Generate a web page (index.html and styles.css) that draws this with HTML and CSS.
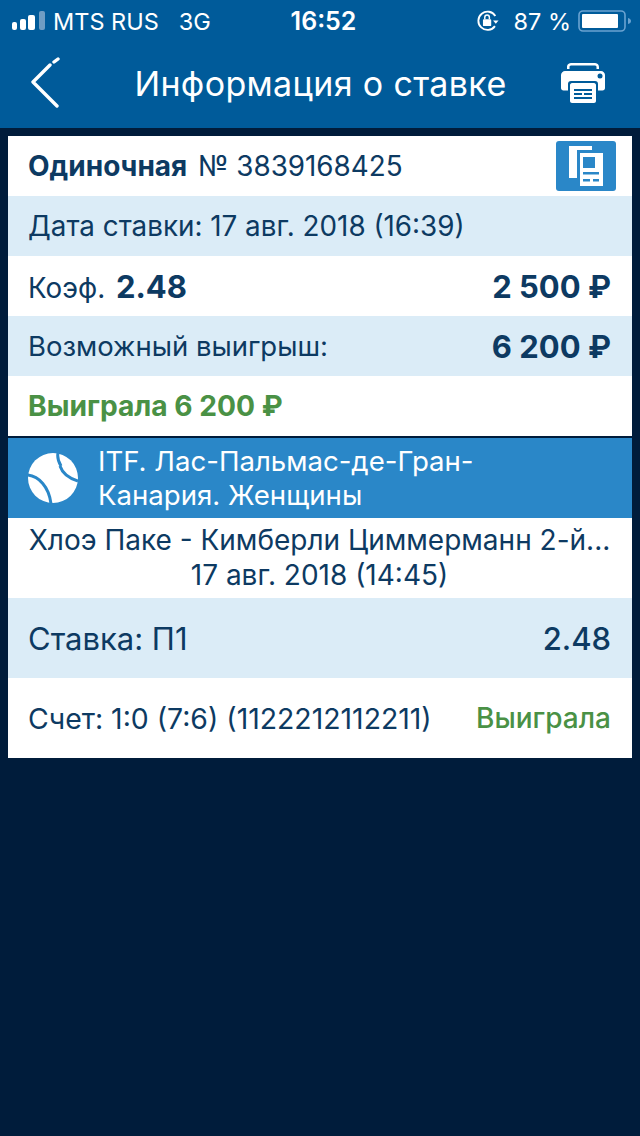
FILE: index.html
```html
<!DOCTYPE html>
<html lang="ru">
 <head>
  <meta charset="utf-8">
  <meta name="viewport" content="width=device-width, initial-scale=1.0">
  <title>Информация о ставке</title>
  <link rel="stylesheet" href="styles.css">
 </head>
 <body>
  <header class="header">
   <div class="status">
    <div class="status-left">
     <svg class="signal" width="33" height="20" viewBox="0 0 33 20">
      <rect x="0" y="11" width="5" height="8" rx="2" fill="#fff"/>
      <rect x="8" y="8" width="6" height="11" rx="2" fill="#fff"/>
      <rect x="16" y="4" width="7" height="15" rx="2" fill="#fff"/>
      <rect x="27" y="0" width="6" height="19" rx="2" fill="#6f9dc4"/>
     </svg>
     <span class="carrier">MTS RUS</span>
     <span class="network">3G</span>
    </div>
    <div class="clock">16:52</div>
    <div class="status-right">
     <svg class="lock" width="24" height="22" viewBox="0 0 26 24">
      <path d="M20.600 17.600A10 10 0 1 1 21 6.500" fill="none" stroke="#fff" stroke-width="2"/>
      <path d="M18.500 11.500h6l-3 3.500z" fill="#fff"/>
      <rect x="7.500" y="10" width="9" height="7.500" rx="1" fill="#fff"/>
      <path d="M9.500 10V8a2.500 2.500 0 0 1 5 0v2" fill="none" stroke="#fff" stroke-width="1.600"/>
     </svg>
     <span class="battery-text">87 %</span>
     <svg class="battery" width="54" height="24" viewBox="0 0 54 24">
      <rect x="1" y="2" width="46" height="20" rx="4" fill="none" stroke="#6aa3d1" stroke-width="1.600"/>
      <rect x="4" y="5" width="36" height="14" rx="1" fill="#fff"/>
      <path d="M50 9c2 .5 3 1.500 3 3s-1 2.500-3 3z" fill="#6aa3d1"/>
     </svg>
    </div>
   </div>
   <div class="nav">
    <svg class="back" width="30" height="52" viewBox="0 0 30 52">
     <path d="M28 2 24 5M20 8 3 25 27 49" fill="none" stroke="#fff" stroke-width="3.400" stroke-linecap="round" stroke-linejoin="round"/>
    </svg>
    <h1 class="title">Информация о ставке</h1>
    <svg class="print" width="44" height="42" viewBox="0 0 44 42">
     <path d="M6 5.500C6 2 8 1 11 1h22c3 0 5 1 5 4.500v1.500h-2.500V5c0-1-.5-1.500-2.500-1.500H11C9 3.500 8.500 4 8.500 5v2H6z" fill="#fff"/>
     <path d="M4 9h36c2 0 4 2 4 4v13c0 1.500-1 2.500-2.500 2.500H37V22a3 3 0 0 0-3-3H10a3 3 0 0 0-3 3v6.500H2.500C1 28.500 0 27.500 0 26V13c0-2 2-4 4-4z" fill="#fff"/>
     <circle cx="39" cy="14" r="2.500" fill="#005b9a"/>
     <path d="M11 21h22c1 0 2 1 2 2v16c0 1-1 2-2 2H11c-1 0-2-1-2-2V23c0-1 1-2 2-2z" fill="#fff"/>
     <path d="M13 27h18v2H13zM13 31h8v2h-8zM23 31h8v2h-8zM13 35h18v2H13z" fill="#005b9a"/>
    </svg>
   </div>
  </header>

  <main class="card">
   <div class="row row-first">
    <div><b class="kind">Одиночная</b> <span class="num">№ 3839168425</span></div>
    <div class="copy">
     <svg width="60" height="50" viewBox="0 0 60 50">
      <path d="M13 5h23v4H21v28h-8z" fill="#fff"/>
      <path d="M24 12h23v33H24z" fill="#fff"/>
      <path d="M27 16h12v11H27zM27 31h16v2.500H27zM27 38h7v2.500h-7zM37 38h6v2.500h-6z" fill="#2a87c8"/>
     </svg>
    </div>
   </div>
   <div class="row row-light">Дата ставки: 17 авг. 2018 (16:39)</div>
   <div class="row">
    <div>Коэф. <b class="coef">2.48</b></div>
    <b class="sum">2 500 ₽</b>
   </div>
   <div class="row row-light">
    <div class="possible">Возможный выигрыш:</div>
    <b class="sum">6 200 ₽</b>
   </div>
   <div class="row"><b class="won">Выиграла 6 200 ₽</b></div>

   <div class="league">
    <svg class="ball" width="50" height="50" viewBox="0 0 50 50">
     <circle cx="25" cy="25" r="25" fill="#fff"/>
     <path d="M30 0c-1 5 0 8 3 13M32 13c2 6 8 12 18 15M-1 22c12 1 22 12 24 29" fill="none" stroke="#2a87c8" stroke-width="3"/>
    </svg>
    <div class="league-name">ITF. Лас-Пальмас-де-Гран-<br>Канария. Женщины</div>
   </div>
   <div class="match">
    <div class="match-name">Хлоэ Паке - Кимберли Циммерманн 2-й...</div>
    <div class="match-date">17 авг. 2018 (14:45)</div>
   </div>
   <div class="row row-light row-tall">
    <div>Ставка: П1</div>
    <div class="odds">2.48</div>
   </div>
   <div class="row row-tall">
    <div class="score">Счет: 1:0 (7:6) (1122212112211)</div>
    <div class="won-small">Выиграла</div>
   </div>
  </main>
 </body>
</html>
```

FILE: styles.css
```css
* {
 box-sizing: border-box;
}

body {
 margin: 0;
 min-height: 1136px;
 background-color: #001c3b;
 color: #0d3a62;
 font-family: 'Inter', 'Liberation Sans', sans-serif;
 font-size: 27.8px;
}

b {
 font-weight: 700;
}

.header {
 height: 128px;
 background-color: #005b9a;
 color: white;
}

.status {
 height: 40px;
 padding: 2px 8px 0 12px;
 display: flex;
 align-items: center;
 justify-content: space-between;
 font-size: 23.5px;
}

.status-left {
 display: flex;
 align-items: center;
 width: 260px;
}

.signal {
 margin-right: 8px;
}

.network {
 margin-left: 20px;
}

.clock {
 font-weight: 600;
 font-size: 25px;
 margin-left: 3px;
}

.status-right {
 display: flex;
 align-items: center;
 justify-content: flex-end;
 width: 260px;
}

.lock {
 margin-right: 13px;
}

.battery {
 margin-left: 7px;
}

.nav {
 height: 88px;
 padding: 0 35px 2px 30px;
 display: flex;
 align-items: center;
 justify-content: space-between;
}

.title {
 margin: 0 0 0 20px;
 font-size: 34px;
 font-weight: 400;
 letter-spacing: 0.35px;
}

.card {
 margin: 8px 8px 0;
 background-color: white;
}

.row {
 height: 60px;
 padding: 0 21px 0 20px;
 display: flex;
 align-items: center;
 justify-content: space-between;
}

.row-first {
 padding-right: 16px;
}

.row-light {
 background-color: #dbecf7;
}

.row-tall {
 height: 80px;
 font-size: 31px;
}

.kind {
 font-size: 28px;
}

.num {
 margin-left: 3px;
}

.copy {
 width: 60px;
 height: 50px;
 background-color: #2a87c8;
 border-radius: 3px;
}

.coef {
 margin-left: 3px;
 font-size: 31px;
}

.sum {
 font-size: 31px;
}

.possible {
 font-size: 27.5px;
}

.won {
 color: #4a9145;
 font-size: 28.2px;
}

.league {
 height: 82px;
 padding: 0 20px;
 border-top: 2px solid #001c3b;
 display: flex;
 align-items: center;
 background-color: #2a87c8;
 color: white;
 font-size: 27.6px;
 line-height: 34px;
}

.ball {
 flex: none;
 margin-right: 20px;
}

.match {
 height: 80px;
 padding: 5px 21px 0 20px;
 text-align: center;
 font-size: 28px;
 line-height: 35px;
}

.match-name {
 white-space: nowrap;
}

.odds {
 font-weight: 500;
}

.score {
 font-size: 28.4px;
}

.won-small {
 color: #4a9145;
 font-size: 28px;
 font-weight: 500;
}
```
